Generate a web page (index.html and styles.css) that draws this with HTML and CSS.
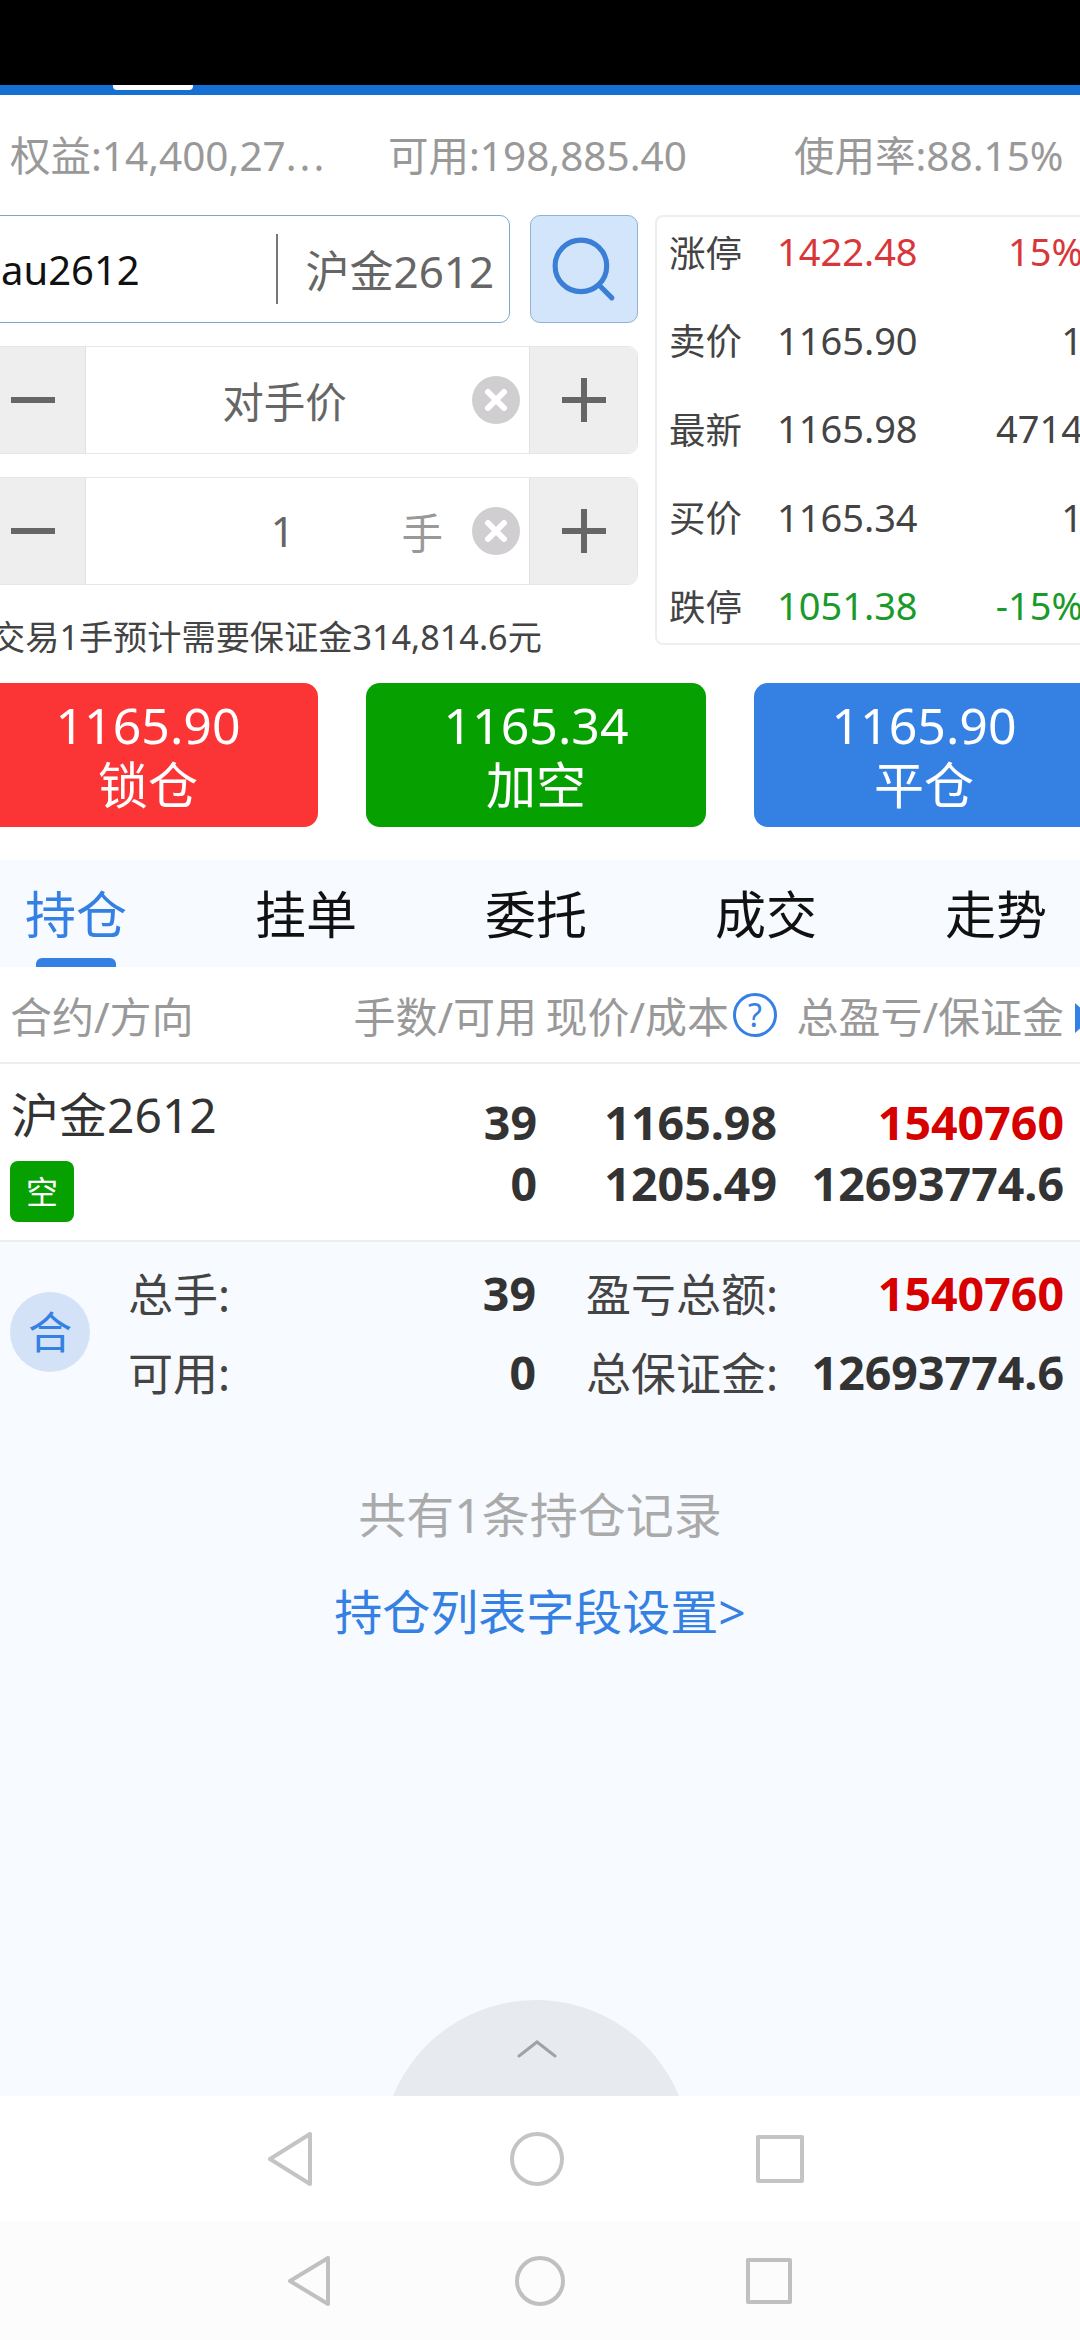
FILE: index.html
```html
<!DOCTYPE html>
<html lang="zh-CN">
<head>
    <meta charset="UTF-8">
    <meta name="viewport" content="width=device-width, initial-scale=1.0">
    <title>持仓</title>
    <link rel="stylesheet" href="styles.css">
</head>
<body>
    <div class="screen">
        <div class="status-bar"></div>
        <div class="top-line"><span class="top-tab"></span></div>

        <div class="stats">
            <span class="stat-equity">权益:14,400,27<span class="dots">...</span></span>
            <span class="stat-free">可用:198,885.40</span>
            <span class="stat-rate">使用率:88.15%</span>
        </div>

        <div class="trade">
            <div class="order-form">
                <div class="search-row">
                    <div class="symbol-box">
                        <span class="symbol-code">au2612</span>
                        <span class="symbol-divider"></span>
                        <span class="symbol-name">沪金2612</span>
                    </div>
                    <button class="search-btn">
                        <svg class="search-icon" viewBox="0 0 64 64" fill="none" stroke="currentColor" stroke-width="5" stroke-linecap="round">
                            <circle cx="29" cy="29" r="25"></circle>
                            <path d="M47 48L59 60"></path>
                        </svg>
                    </button>
                </div>
                <div class="stepper">
                    <span class="step-btn step-minus"><i class="bar-h"></i></span>
                    <span class="step-value step-value-price">对手价</span>
                    <span class="clear-icon">
                        <svg viewBox="0 0 48 48" stroke="#fff" stroke-width="6" stroke-linecap="round"><path d="M16 16L32 32M32 16L16 32"></path></svg>
                    </span>
                    <span class="step-btn step-plus"><i class="bar-h"></i><i class="bar-v"></i></span>
                </div>
                <div class="stepper">
                    <span class="step-btn step-minus"><i class="bar-h"></i></span>
                    <span class="step-value step-value-qty">1</span>
                    <span class="step-unit">手</span>
                    <span class="clear-icon">
                        <svg viewBox="0 0 48 48" stroke="#fff" stroke-width="6" stroke-linecap="round"><path d="M16 16L32 32M32 16L16 32"></path></svg>
                    </span>
                    <span class="step-btn step-plus"><i class="bar-h"></i><i class="bar-v"></i></span>
                </div>
                <div class="margin-note">交易1手预计需要保证金314,814.6元</div>
            </div>

            <div class="quote-panel">
                <div class="quote-row"><span class="quote-label">涨停</span><span class="quote-price up">1422.48</span><span class="quote-extra up">15%</span></div>
                <div class="quote-row"><span class="quote-label">卖价</span><span class="quote-price">1165.90</span><span class="quote-extra">1</span></div>
                <div class="quote-row"><span class="quote-label">最新</span><span class="quote-price">1165.98</span><span class="quote-extra">4714</span></div>
                <div class="quote-row"><span class="quote-label">买价</span><span class="quote-price">1165.34</span><span class="quote-extra">1</span></div>
                <div class="quote-row"><span class="quote-label">跌停</span><span class="quote-price down">1051.38</span><span class="quote-extra down">-15%</span></div>
            </div>
        </div>

        <div class="actions">
            <button class="action action-red"><span>1165.90</span><span>锁仓</span></button>
            <button class="action action-green"><span>1165.34</span><span>加空</span></button>
            <button class="action action-blue"><span>1165.90</span><span>平仓</span></button>
        </div>

        <div class="tabs">
            <div class="tab tab-active">持仓</div>
            <div class="tab">挂单</div>
            <div class="tab">委托</div>
            <div class="tab">成交</div>
            <div class="tab">走势</div>
        </div>

        <div class="table-head">
            <span class="head-name">合约/方向</span>
            <span>手数/可用</span>
            <span class="head-price">现价/成本<i class="help-icon">?</i></span>
            <span>总盈亏/保证金</span>
            <i class="head-arrow"></i>
        </div>

        <div class="position-row">
            <div class="position-name">
                <span class="contract">沪金2612</span>
                <span class="side-badge">空</span>
            </div>
            <div class="cell-pair"><span>39</span><span>0</span></div>
            <div class="cell-pair"><span>1165.98</span><span>1205.49</span></div>
            <div class="cell-pair"><span class="loss">1540760</span><span>12693774.6</span></div>
        </div>

        <div class="lower">
            <div class="summary">
                <span class="summary-mark">合</span>
                <div class="summary-grid">
                    <span class="sum-label">总手:</span>
                    <span class="sum-value">39</span>
                    <span class="sum-label sum-label-wide">盈亏总额:</span>
                    <span class="sum-value loss">1540760</span>
                    <span class="sum-label">可用:</span>
                    <span class="sum-value">0</span>
                    <span class="sum-label sum-label-wide">总保证金:</span>
                    <span class="sum-value">12693774.6</span>
                </div>
            </div>
            <div class="record-count">共有1条持仓记录</div>
            <div class="field-link">持仓列表字段设置&gt;</div>
            <div class="drawer-handle">
                <svg class="drawer-shape" viewBox="0 0 286 96"><path d="M0 96A154.500 154.500 0 0 1 286 96Z" fill="#e7ebef"></path></svg>
                <svg class="drawer-chevron" viewBox="0 0 40 20" fill="none" stroke="#a0a3a6" stroke-width="3" stroke-linecap="round"><path d="M2 17L20 3L38 17"></path></svg>
            </div>
        </div>

        <div class="nav nav-app">
            <svg class="nav-back" viewBox="0 0 46 54" fill="none" stroke="#c4c4c6" stroke-width="4" stroke-linejoin="round"><path d="M43 2V52L3 27Z"></path></svg>
            <svg class="nav-home" viewBox="0 0 54 54" fill="none" stroke="#c4c4c6" stroke-width="4"><circle cx="27" cy="27" r="25"></circle></svg>
            <svg class="nav-recent" viewBox="0 0 48 48" fill="none" stroke="#c4c4c6" stroke-width="4" stroke-linejoin="round"><rect x="2" y="2" width="44" height="44"></rect></svg>
        </div>
        <div class="nav nav-system">
            <svg class="nav-back" viewBox="0 0 44 50" fill="none" stroke="#c0c0c0" stroke-width="4" stroke-linejoin="round"><path d="M41 2V48L3 25Z"></path></svg>
            <svg class="nav-home" viewBox="0 0 50 50" fill="none" stroke="#c0c0c0" stroke-width="4"><circle cx="25" cy="25" r="23"></circle></svg>
            <svg class="nav-recent" viewBox="0 0 46 46" fill="none" stroke="#c0c0c0" stroke-width="4" stroke-linejoin="round"><rect x="2" y="2" width="42" height="42"></rect></svg>
        </div>
    </div>
</body>
</html>
```

FILE: styles.css
```css
* {
    box-sizing: border-box;
}

body {
    margin: 0;
    background: white;
    font-family: "Noto Sans", "Noto Sans CJK SC", sans-serif;
    color: #444;
}

button {
    font-family: inherit;
    padding: 0;
}

i {
    font-style: normal;
}

.screen {
    width: 1080px;
    height: 2340px;
    display: flex;
    flex-direction: column;
    overflow: hidden;
}

.status-bar {
    height: 85px;
    background: #000;
    flex: none;
}

.top-line {
    height: 10px;
    background: #166fd3;
    flex: none;
}

.top-tab {
    display: block;
    width: 80px;
    height: 5px;
    margin-left: 113px;
    background: white;
    border-radius: 0 0 4px 4px;
}

.stats {
    height: 120px;
    flex: none;
    display: flex;
    align-items: center;
    font-size: 40.5px;
    color: #999;
    padding-bottom: 4px;
    white-space: nowrap;
}

.stat-equity {
    margin-left: 10px;
    width: 378px;
}

.dots {
    letter-spacing: 3px;
}

.stat-free {
    width: 406px;
}

.trade {
    display: flex;
    height: 430px;
    flex: none;
}

.order-form {
    width: 650px;
    margin-left: -12px;
    flex: none;
}

.search-row {
    display: flex;
    gap: 20px;
    height: 108px;
}

.symbol-box {
    flex: 1;
    display: flex;
    align-items: center;
    border: 1.5px solid #7fa7c9;
    border-radius: 10px;
    padding-left: 12px;
}

.symbol-code {
    width: 275px;
    font-size: 40px;
    color: #111;
}

.symbol-divider {
    width: 1.5px;
    height: 70px;
    background: #777;
}

.symbol-name {
    margin-left: 28px;
    font-size: 44px;
    color: #666;
    white-space: nowrap;
}

.search-btn {
    width: 108px;
    height: 108px;
    border: 1.5px solid #8fb2d8;
    border-radius: 10px;
    background: #d3e5fb;
    color: #3a7fd5;
    display: flex;
    align-items: center;
    justify-content: center;
}

.search-icon {
    width: 66px;
    height: 66px;
}

.stepper {
    display: flex;
    align-items: center;
    height: 108px;
    margin-top: 23px;
    border: 1.5px solid #e6e6e6;
    border-radius: 10px;
    background: white;
    overflow: hidden;
}

.step-btn {
    position: relative;
    align-self: stretch;
    background: #eee;
    flex: none;
}

.step-minus {
    width: 97px;
    border-right: 1.5px solid #e2e2e2;
}

.step-plus {
    width: 108px;
    border-left: 1.5px solid #e2e2e2;
}

.bar-h,
.bar-v {
    position: absolute;
    background: #666;
}

.bar-h {
    width: 44px;
    height: 6px;
    top: calc(50% - 3px);
    left: calc(50% - 22px);
}

.step-minus .bar-h {
    left: 22px;
}

.bar-v {
    width: 6px;
    height: 44px;
    top: calc(50% - 22px);
    left: calc(50% - 3px);
}

.step-value {
    flex: 1;
    text-align: center;
    font-size: 41.5px;
    color: #666;
}

.step-value-price {
    padding-left: 11px;
}

.step-value-qty {
    padding-left: 78px;
}

.step-unit {
    font-size: 41.5px;
    color: #999;
    margin-right: 29px;
}

.clear-icon {
    width: 48px;
    height: 48px;
    margin-right: 9px;
    border-radius: 50%;
    background: #d0ced0;
    flex: none;
}

.clear-icon svg {
    display: block;
}

.margin-note {
    margin: 30px 0 0 3px;
    font-size: 34.2px;
    line-height: 44px;
    color: #444;
    white-space: nowrap;
}

.quote-panel {
    width: 445px;
    margin-left: 17px;
    flex: none;
    display: flex;
    flex-direction: column;
    justify-content: space-between;
    border: 2px solid #eee;
    border-radius: 8px;
    padding-left: 12px;
}

.quote-row {
    height: 72px;
    padding-bottom: 4px;
    display: flex;
    align-items: center;
    font-size: 38px;
    color: #444;
}

.quote-label {
    width: 108px;
    font-size: 36.5px;
}

.quote-price {
    width: 160px;
}

.quote-extra {
    width: 146px;
    text-align: right;
}

.up {
    color: #d9363a;
}

.down {
    color: #1a9a2a;
}

.actions {
    display: flex;
    gap: 48px;
    margin: 38px 0 0 -22px;
    flex: none;
}

.action {
    width: 340px;
    height: 144px;
    flex: none;
    border: none;
    border-radius: 14px;
    color: white;
    font-size: 50px;
    line-height: 60px;
    display: flex;
    flex-direction: column;
    align-items: center;
    justify-content: center;
}

.action-red {
    background: #fb3535;
}

.action-green {
    background: #06a000;
}

.action-blue {
    background: #3580e3;
}

.tabs {
    display: flex;
    height: 107px;
    margin-top: 33px;
    background: #f7faff;
    flex: none;
}

.tab {
    position: relative;
    width: 230px;
    flex: none;
    text-align: center;
    font-size: 51px;
    line-height: 108px;
    color: #111;
}

.tab:first-child {
    margin-left: -39px;
}

.tab-active {
    color: #3580e3;
}

.tab-active::after {
    content: "";
    position: absolute;
    left: 75px;
    bottom: 0;
    width: 80px;
    height: 9px;
    background: #3580e3;
    border-radius: 6px 6px 0 0;
}

.table-head,
.position-row {
    display: grid;
    grid-template-columns: 1fr 240px 240px 287px;
    margin-right: 16px;
}

.table-head {
    position: relative;
    height: 97px;
    flex: none;
    align-items: center;
    font-size: 42px;
    color: #999;
    text-align: right;
    white-space: nowrap;
    margin-right: 0;
    padding-right: 16px;
    border-bottom: 2px solid #eee;
    overflow: hidden;
}

.head-name {
    text-align: left;
    padding-left: 10px;
}

.head-price {
    display: flex;
    align-items: center;
    justify-content: flex-end;
    gap: 4px;
}

.help-icon {
    width: 44px;
    height: 44px;
    border: 3px solid #3580e3;
    border-radius: 50%;
    font-size: 32px;
    line-height: 38px;
    text-align: center;
    color: #3580e3;
    flex: none;
}

.head-arrow {
    position: absolute;
    right: -12px;
    top: 36px;
    width: 17px;
    height: 30px;
    background: #3580e3;
    clip-path: polygon(0 0, 100% 50%, 0 100%);
}

.position-row {
    height: 176px;
    flex: none;
    align-items: start;
}

.position-name {
    padding: 24px 0 0 11px;
    display: flex;
    flex-direction: column;
    align-items: flex-start;
}

.contract {
    font-size: 48px;
    line-height: 54px;
    color: #333;
}

.side-badge {
    width: 64px;
    height: 61px;
    margin: 19px 0 0 -1px;
    border-radius: 8px;
    background: #06a000;
    color: white;
    font-size: 32px;
    line-height: 61px;
    text-align: center;
}

.cell-pair {
    display: flex;
    flex-direction: column;
    align-items: flex-end;
    padding-top: 28px;
    font-size: 46.5px;
    line-height: 61px;
    font-weight: 700;
    color: #333;
}

.loss {
    color: #d60000;
}

.lower {
    flex: 1;
    background: #f7faff;
    border-top: 2px solid #eee;
    display: flex;
    flex-direction: column;
    align-items: center;
}

.summary {
    width: 100%;
    display: flex;
    align-items: center;
    padding: 11px 16px 0 10px;
}

.summary-mark {
    width: 80px;
    height: 80px;
    border-radius: 50%;
    background: #d3e2f7;
    color: #3580e3;
    font-size: 44px;
    line-height: 80px;
    text-align: center;
    flex: none;
    margin-right: 38px;
}

.summary-grid {
    flex: 1;
    display: grid;
    grid-template-columns: 100px 308px 240px 288px;
    grid-auto-rows: 79px;
    align-items: center;
    font-size: 46.5px;
    white-space: nowrap;
}

.sum-label {
    font-size: 45px;
    color: #444;
}

.sum-label-wide {
    padding-left: 50px;
}

.sum-value {
    text-align: right;
    font-weight: 700;
    color: #333;
}

.sum-value.loss {
    color: #d60000;
}

.record-count {
    margin-top: 71px;
    font-size: 48px;
    line-height: 66px;
    color: #aaa;
}

.field-link {
    margin-top: 31px;
    font-size: 48px;
    line-height: 66px;
    color: #3580e3;
}

.drawer-handle {
    position: relative;
    width: 286px;
    height: 96px;
    margin: auto 8px 0 0;
    flex: none;
}

.drawer-shape {
    display: block;
    width: 286px;
    height: 96px;
}

.drawer-chevron {
    position: absolute;
    left: 124px;
    top: 39px;
    width: 40px;
    height: 20px;
}

.nav {
    display: flex;
    align-items: center;
    flex: none;
}

.nav-app {
    height: 126px;
    background: white;
}

.nav-app .nav-back {
    width: 46px;
    height: 54px;
    margin-left: 267px;
}

.nav-app .nav-home {
    width: 54px;
    height: 54px;
    margin-left: 197px;
}

.nav-app .nav-recent {
    width: 48px;
    height: 48px;
    margin-left: 192px;
}

.nav-system {
    height: 118px;
    background: #fcfcfc;
}

.nav-system .nav-back {
    width: 44px;
    height: 50px;
    margin-left: 287px;
}

.nav-system .nav-home {
    width: 50px;
    height: 50px;
    margin-left: 184px;
}

.nav-system .nav-recent {
    width: 46px;
    height: 46px;
    margin-left: 181px;
}
```
